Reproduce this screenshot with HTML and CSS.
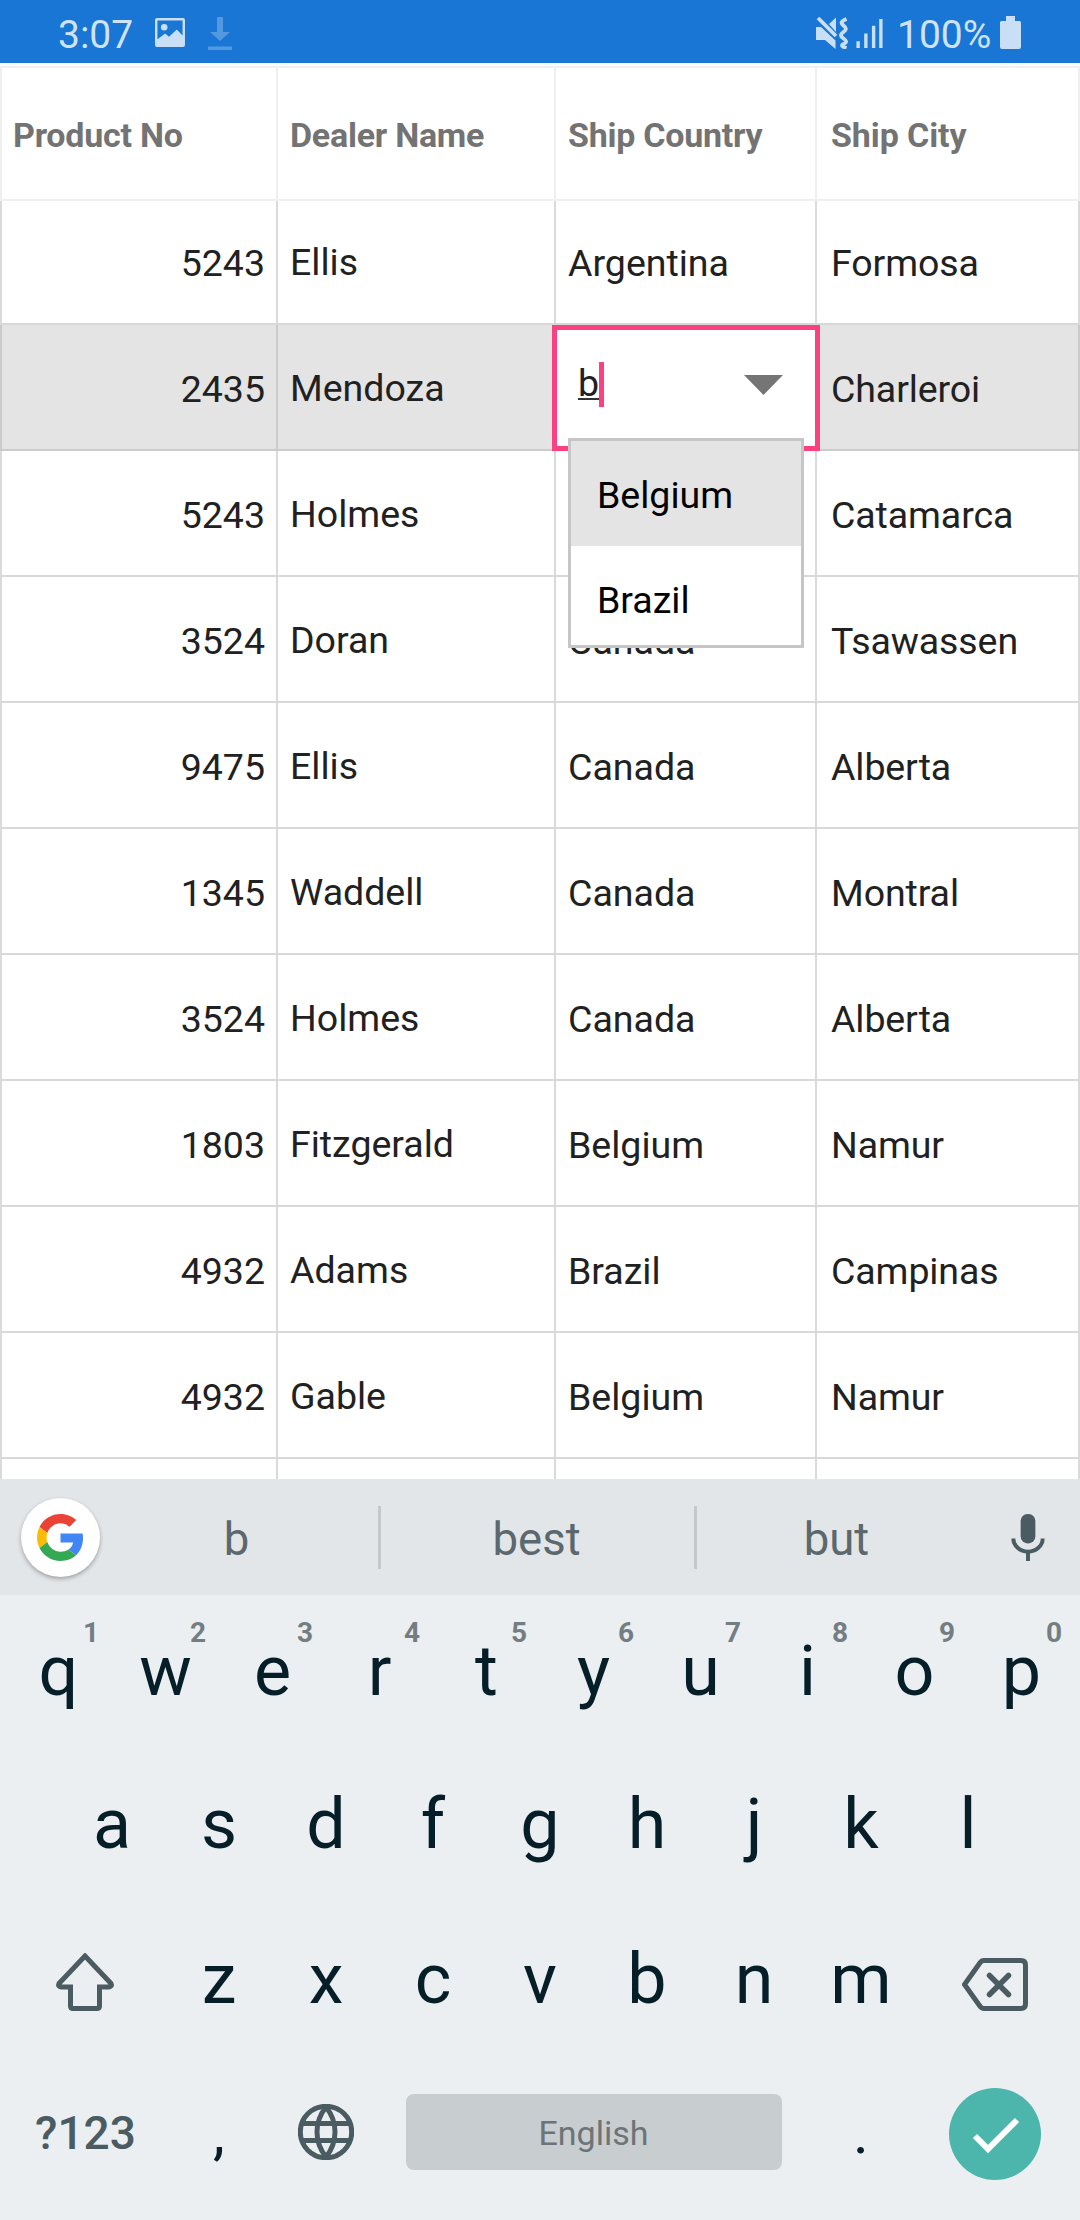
FILE: index.html
```html
<!DOCTYPE html>
<html lang="en">
<head>
<meta charset="utf-8">
<title>Orders</title>
<link rel="stylesheet" href="styles.css">
</head>
<body>
<div class="screen">
  <header class="status">
    <span class="clock">3:07</span>
    <svg class="ic-photo" viewBox="0 0 31 30"><path fill-rule="evenodd" d="M2 0h27a2 2 0 0 1 2 2v26a2 2 0 0 1-2 2H2a2 2 0 0 1-2-2V2a2 2 0 0 1 2-2zM2.500 2.500v19.500l8-6 4 3.500 8-7.500 6 6V2.500z"/><circle cx="9.500" cy="9.500" r="3.400"/></svg>
    <svg class="ic-download" viewBox="0 0 24 34"><path d="M9 0h6v15h7L12 24 2 15h7zM0 29.500h24v3.500H0z"/></svg>
    <span class="spacer"></span>
    <svg class="ic-mute" viewBox="0 0 32 32"><path d="M0 10h5l14.500 13.500V32L9 23H0zM20 .5V15l-7-8z"/><path d="M2 1l18 18" class="line"/><path d="M30.500 2c-6 2.500-6 4-3 6.500s3.500 4 0 6.500-3.500 4 0 6.500 3.500 4 0 5.500 0 3 3 4" class="line"/></svg>
    <svg class="ic-signal" viewBox="0 0 27 31"><path d="M0 24h3.500v7H0zM8 16h3.500v15H8zM16 8h3.500v23H16zM23.500 1H27v30h-3.500z"/></svg>
    <span class="percent">100%</span>
    <svg class="ic-battery" viewBox="0 0 21 33"><path d="M6 0h9v5h4.500a1.500 1.500 0 0 1 1.500 1.500V31a2 2 0 0 1-2 2H2a2 2 0 0 1-2-2V6.500A1.500 1.500 0 0 1 1.500 5H6z"/></svg>
  </header>

  <main class="grid">
    <div class="row head"><div class="cell">Product No</div><div class="cell">Dealer Name</div><div class="cell">Ship Country</div><div class="cell">Ship City</div></div>
    <div class="row first"><div class="cell num">5243</div><div class="cell name">Ellis</div><div class="cell">Argentina</div><div class="cell">Formosa</div></div>
    <div class="row selected"><div class="cell num">2435</div><div class="cell name">Mendoza</div>
      <div class="cell editing">
        <div class="editor"><span class="typed">b</span><span class="caret"></span><svg class="arrow" viewBox="0 0 39 20"><path d="M0 0h39L19.500 20z"/></svg></div>
        <div class="dropdown"><div class="option active">Belgium</div><div class="option">Brazil</div></div>
      </div>
      <div class="cell">Charleroi</div></div>
    <div class="row"><div class="cell num">5243</div><div class="cell name">Holmes</div><div class="cell"></div><div class="cell">Catamarca</div></div>
    <div class="row"><div class="cell num">3524</div><div class="cell name">Doran</div><div class="cell">Canada</div><div class="cell">Tsawassen</div></div>
    <div class="row"><div class="cell num">9475</div><div class="cell name">Ellis</div><div class="cell">Canada</div><div class="cell">Alberta</div></div>
    <div class="row"><div class="cell num">1345</div><div class="cell name">Waddell</div><div class="cell">Canada</div><div class="cell">Montral</div></div>
    <div class="row"><div class="cell num">3524</div><div class="cell name">Holmes</div><div class="cell">Canada</div><div class="cell">Alberta</div></div>
    <div class="row"><div class="cell num">1803</div><div class="cell name">Fitzgerald</div><div class="cell">Belgium</div><div class="cell">Namur</div></div>
    <div class="row"><div class="cell num">4932</div><div class="cell name">Adams</div><div class="cell">Brazil</div><div class="cell">Campinas</div></div>
    <div class="row"><div class="cell num">4932</div><div class="cell name">Gable</div><div class="cell">Belgium</div><div class="cell">Namur</div></div>
    <div class="row"><div class="cell"></div><div class="cell"></div><div class="cell"></div><div class="cell"></div></div>
  </main>

  <section class="keyboard">
    <div class="suggest">
      <div class="google"><svg viewBox="0 0 48 48"><path fill="#ea4335" d="M24 9.500c3.540 0 6.710 1.220 9.210 3.600l6.850-6.850C35.900 2.380 30.470 0 24 0 14.620 0 6.510 5.380 2.560 13.220l7.980 6.190C12.430 13.720 17.740 9.500 24 9.500z"/><path fill="#4285f4" d="M46.980 24.550c0-1.570-.15-3.090-.38-4.550H24v9.020h12.940c-.58 2.960-2.260 5.480-4.780 7.180l7.730 6c4.510-4.180 7.090-10.360 7.090-17.650z"/><path fill="#fbbc05" d="M10.530 28.590c-.48-1.450-.76-2.990-.76-4.590s.27-3.140.76-4.590l-7.980-6.190C.92 16.460 0 20.120 0 24c0 3.880.92 7.540 2.560 10.780l7.970-6.190z"/><path fill="#34a853" d="M24 48c6.480 0 11.930-2.130 15.890-5.810l-7.730-6c-2.150 1.450-4.920 2.300-8.160 2.300-6.260 0-11.570-4.220-13.470-9.910l-7.980 6.190C6.510 42.620 14.620 48 24 48z"/></svg></div>
      <span class="word">b</span><span class="word mid">best</span><span class="word">but</span>
      <div class="mic"><svg viewBox="0 0 34 48"><rect x="9.500" y="0" width="15" height="30" rx="7"/><path class="stroke" d="M2 25a15 13.500 0 0 0 30 0M17 38.500V48"/></svg></div>
    </div>
    <div class="keys">
      <div class="krow">
        <div class="key">q<sup>1</sup></div><div class="key">w<sup>2</sup></div><div class="key">e<sup>3</sup></div><div class="key">r<sup>4</sup></div><div class="key">t<sup>5</sup></div><div class="key">y<sup>6</sup></div><div class="key">u<sup>7</sup></div><div class="key">i<sup>8</sup></div><div class="key">o<sup>9</sup></div><div class="key">p<sup>0</sup></div>
      </div>
      <div class="krow second">
        <div class="key">a</div><div class="key">s</div><div class="key">d</div><div class="key">f</div><div class="key">g</div><div class="key">h</div><div class="key">j</div><div class="key">k</div><div class="key">l</div>
      </div>
      <div class="krow">
        <div class="key wide"><svg class="shift" viewBox="0 0 58 58"><path class="stroke" d="M29 3L55 30.500q1.500 3-2 3.500H43.500V53q0 2.500-2.500 2.500H17q-2.500 0-2.500-2.500V34H5q-3.500-.5-2-3.500z"/></svg></div>
        <div class="key">z</div><div class="key">x</div><div class="key">c</div><div class="key">v</div><div class="key">b</div><div class="key">n</div><div class="key">m</div>
        <div class="key wide"><svg class="back" viewBox="0 0 66 53"><path class="stroke" d="M22 2.500H59q4.500 0 4.500 4.500V46q0 4.500-4.500 4.500H22q-2.500 0-4-2.300L2.500 26.500 18 4.800q1.500-2.300 4-2.300z"/><path class="stroke cross" d="M27.500 17.500L46.500 36.500M46.500 17.500L27.500 36.500"/></svg></div>
      </div>
      <div class="krow bottom">
        <div class="key wide mode">?123</div>
        <div class="key punct">,</div>
        <div class="key"><svg class="globe" viewBox="0 0 56 56"><circle class="stroke" cx="28" cy="28" r="25.700"/><path class="stroke" d="M5 19.500H51M5 36.500H51M28 3c-12 15-12 35 0 50M28 3c12 15 12 35 0 50"/></svg></div>
        <div class="space">English</div>
        <div class="key punct">.</div>
        <div class="key wide"><div class="done"><svg viewBox="0 0 92 92"><path d="M26 48L39 61 68 32"/></svg></div></div>
      </div>
    </div>
  </section>
</div>
</body>
</html>
```
FILE: styles.css
```css
* { box-sizing: border-box; }
body { margin: 0; background: #fff; font-family: Roboto, sans-serif; }
svg { display: block; flex: none; }
.screen { width: 1080px; height: 2220px; display: flex; flex-direction: column; overflow: hidden; }

/* status bar */
.status { height: 63px; flex: none; display: flex; align-items: flex-start; padding: 0 59px 0 58px; background: #1976d4; color: #cfe2f6; fill: #c9dff5; font-size: 39px; line-height: 70px; }
.clock { width: 97px; }
.ic-photo { width: 30px; height: 29px; margin-top: 18px; }
.ic-download { width: 24px; height: 34px; margin: 17px 0 0 23px; fill: #5499df; }
.spacer { flex: 1; }
.ic-mute { width: 32px; height: 32px; margin-top: 17px; }
.ic-mute .line { fill: none; stroke: #c9dff5; stroke-width: 3.8; }
.ic-signal { width: 27px; height: 30px; margin: 18px 0 0 8px; }
.percent { width: 103px; margin-left: 14px; white-space: nowrap; }
.ic-battery { width: 21px; height: 33px; margin-top: 16px; }

/* data grid */
.grid { flex: none; height: 1416px; padding-top: 3px; overflow: hidden; color: #212121; font-size: 37.5px; }
.row { display: grid; grid-template-columns: 278px 278px 261px 263px; height: 126px; }
.cell { display: flex; align-items: center; padding: 4px 0 0 12px; border-right: 2px solid #dadada; border-bottom: 2px solid #d8d8d8; white-space: nowrap; }
.cell:first-child { border-left: 2px solid #dadada; padding-left: 11px; }
.cell:last-child { padding-left: 14px; letter-spacing: -.1px; }
.cell.num { justify-content: flex-end; padding-right: 11px; }
.row .cell.name { padding-top: 2px; }
.row.first { height: 124px; }
.row.first .cell { padding-top: 2px; }
.row.first .cell.name { padding-top: 0; }
.row.selected { background: #e4e4e4; }
.row.selected .cell { border-color: #cbcbcb; }
.row.head { height: 135px; border-top: 2px solid #f0f0f0; color: #737373; font-size: 34px; font-weight: 700; letter-spacing: -.25px; }
.head .cell { padding-top: 3px; border-color: #efefef; }
.row .cell.editing { position: relative; padding: 0; }
.editor { position: absolute; z-index: 1; left: -4px; top: 0; width: 268px; height: 126px; display: flex; align-items: center; padding: 0 32px 14px 21px; border: 5px solid #fb4180; background: #fff; }
.typed { margin-top: 5px; border-bottom: 2px solid #333; line-height: 30px; }
.caret { width: 5px; height: 45px; margin: 6px auto 0 0; background: #fb4180; }
.arrow { width: 39px; height: 20px; margin-top: 8px; fill: #757575; }
.dropdown { position: absolute; z-index: 2; left: 12px; top: 113px; width: 236px; height: 210px; border: 3px solid #c6c6c6; background: #fff; color: #000; }
.option { height: 105px; padding: 1px 0 0 26px; line-height: 106px; }
.option.active { background: #e4e4e4; }

/* keyboard */
.keyboard { flex: 1; background: #ebeff2; color: #051e28; }
.stroke { fill: none; stroke: #4a5b62; stroke-width: 5; }
.suggest { height: 116px; display: grid; grid-template-columns: 95px 283px 319px 279px 104px; align-items: center; background: #e2e6e9; color: #5b686e; font-size: 45.5px; }
.google { width: 79px; height: 79px; margin-left: 21px; display: flex; align-items: center; justify-content: center; border-radius: 50%; background: #fff; box-shadow: 0 2px 4px rgba(0, 0, 0, .3); }
.google svg { width: 47px; height: 47px; }
.word { height: 63px; line-height: 68px; text-align: center; }
.word.mid { padding-right: 2px; border-left: 3px solid #c3c8cb; border-right: 3px solid #c3c8cb; }
.mic { display: flex; justify-content: center; }
.mic svg { width: 34px; height: 47px; fill: #4a5b62; }
.mic .stroke { stroke-width: 4; }
.keys { padding: 0 5px; }
.krow { height: 154px; display: flex; justify-content: center; font-size: 70px; line-height: 150px; }
.key { position: relative; width: 107px; padding-bottom: 2px; text-align: center; display: flex; align-items: center; justify-content: center; }
.second .key { padding-bottom: 4px; }
.key.wide { width: 160px; }
.key sup { position: absolute; left: 71px; top: 23px; width: 30px; font-size: 28px; line-height: 30px; font-weight: 700; color: #747d81; }
.shift { width: 58px; height: 58px; margin: 6px 2px 0 0; }
.back { width: 66px; height: 53px; margin-top: 10px; }
.cross { stroke-width: 5.500; stroke-linecap: round; }
.mode { font-size: 46px; font-weight: 500; color: #4a5b62; }
.globe { width: 56px; height: 56px; margin: -2px 1px 0 0; }
.punct { font-size: 60px; }
.space { width: 376px; height: 76px; margin: -4px 26px 0; align-self: center; border-radius: 8px; background: #c8cdd0; color: #6c7478; font-size: 34px; line-height: 78px; text-align: center; }
.done { width: 92px; height: 92px; margin-top: 2px; border-radius: 50%; background: #4db6ac; }
.done svg { width: 92px; height: 92px; fill: none; stroke: #fff; stroke-width: 6; }
```
